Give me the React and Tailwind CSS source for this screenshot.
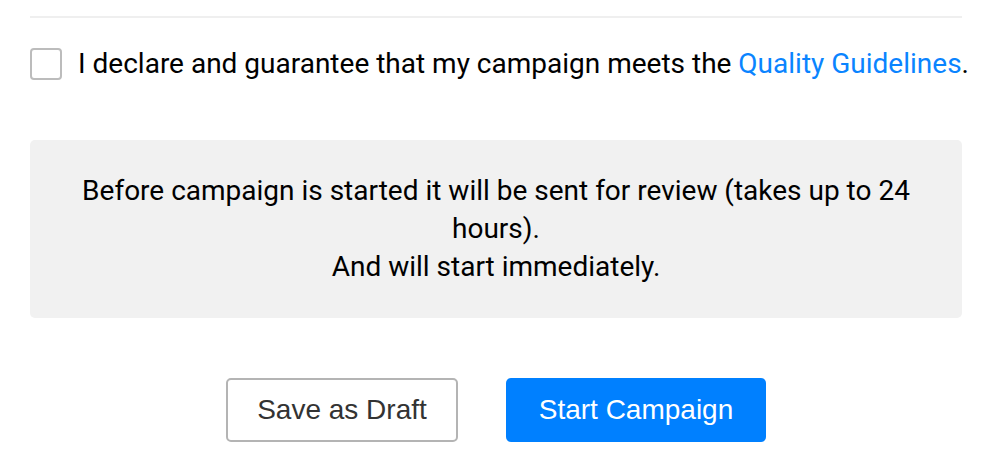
export default function App() {
  return (
    <div className="w-[1002px] h-[476px] bg-white pl-[30px] pr-[40px] pt-4 font-['Roboto',sans-serif] text-black">
      <hr className="border-0 h-[2px] bg-[#efefef]" />

      {/* Guidelines agreement */}
      <label className="mt-[30px] flex items-center gap-4 whitespace-nowrap text-[28px] leading-[32px]">
        <span className="w-8 h-8 shrink-0 rounded-[4px] border-2 border-[#bcbcbc] bg-white" />
        <span>
          I declare and guarantee that my campaign meets the{' '}
          <a href="#" className="text-[#0a84ff]">Quality Guidelines</a>.
        </span>
      </label>

      {/* Review notice */}
      <div className="mt-[60px] h-[178px] rounded-[5px] bg-[#f1f1f1] px-[40px] pt-[32px] text-center text-[28px] leading-[38px]">
        Before campaign is started it will be sent for review (takes up to 24 hours).
        <br />
        And will start immediately.
      </div>

      {/* Actions */}
      <div className="mt-[60px] flex justify-center gap-12 font-['Liberation_Sans',Arial,sans-serif] text-[28px]">
        <button
          type="button"
          className="w-[232px] h-16 rounded-[5px] border-2 border-[#b4b4b4] bg-white text-[#333]"
        >
          Save as Draft
        </button>
        <button
          type="button"
          className="w-[260px] h-16 rounded-[5px] bg-[#0080ff] text-white"
        >
          Start Campaign
        </button>
      </div>
    </div>
  );
}
